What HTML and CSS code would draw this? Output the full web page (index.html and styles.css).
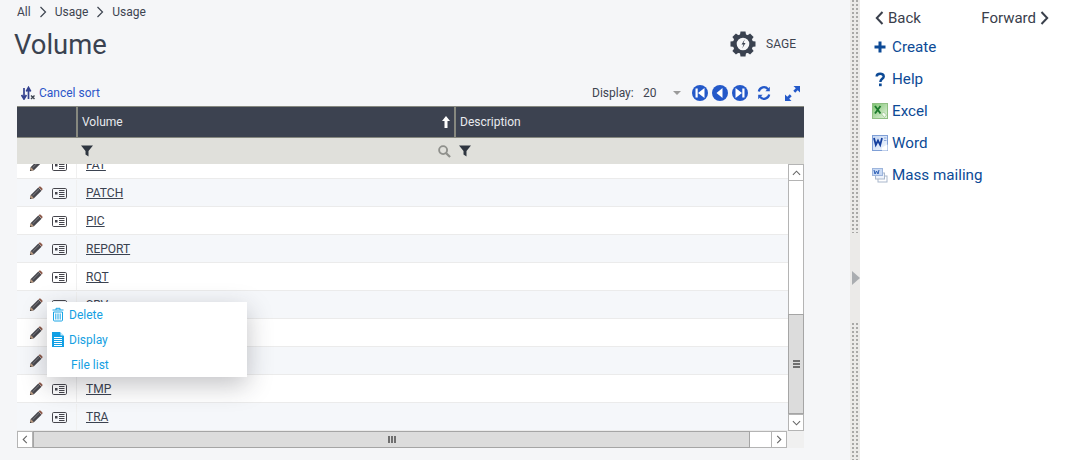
FILE: index.html
```html
<!DOCTYPE html>
<html lang="en">
<head>
<meta charset="utf-8">
<title>Volume</title>
<link rel="stylesheet" href="styles.css">
</head>
<body>
<svg class="defs" width="0" height="0" aria-hidden="true">
  <defs>
    <linearGradient id="xlsfill" x1="0" y1="0" x2="1" y2="1"><stop offset="0" stop-color="#7cc36f"/><stop offset="1" stop-color="#e6f4e0"/></linearGradient>
    <linearGradient id="docfill" x1="0" y1="0" x2="1" y2="1"><stop offset="0" stop-color="#c3d6f3"/><stop offset="1" stop-color="#f3f7fd"/></linearGradient>
  </defs>
  <symbol id="pencil" viewBox="0 0 15 15">
    <path d="M1 14l.9-4.300L10 1.600l3.400 3.400-8.100 8.100z" fill="#46464c"/>
    <path d="M10.800.8c.5-.5 1.200-.5 1.700 0l1.700 1.700c.5.500.5 1.200 0 1.700l-.6.600-3.400-3.400z" fill="#8c5a4a"/>
    <path d="M1 14l.9-4.300 3.400 3.400z" fill="#b99a80"/>
    <path d="M1 14l.4-1.800 1.400 1.400z" fill="#333"/>
    <path d="M3.800 10.500l7-7" stroke="#8b8b90" stroke-width=".9"/>
  </symbol>
  <symbol id="card" viewBox="0 0 15 11">
    <rect x=".5" y=".5" width="14" height="10" rx="1.200" fill="none" stroke="#45454c" stroke-width="1"/>
    <rect x="3" y="4" width="2.500" height="2.500" fill="#45454c"/>
    <path d="M7 2.500h5.500M7 4.500h5.500M7 6.500h5.500M7 8.500h5.500" stroke="#45454c" stroke-width="1"/>
  </symbol>
  <symbol id="funnel" viewBox="0 0 12 12">
    <path d="M0 .5h12L7.500 6v5.500L4.500 9.500V6z" fill="#2f3640"/>
  </symbol>
</svg>

<main class="main">
  <nav class="crumbs">
    <span>All</span>
    <svg class="crumb-sep" viewBox="0 0 8 12"><path d="M1.500 1l5 5-5 5" fill="none" stroke="#3d4450" stroke-width="1.200"/></svg>
    <span>Usage</span>
    <svg class="crumb-sep" viewBox="0 0 8 12"><path d="M1.500 1l5 5-5 5" fill="none" stroke="#3d4450" stroke-width="1.200"/></svg>
    <span>Usage</span>
  </nav>

  <header class="title-row">
    <h1 class="title">Volume</h1>
    <div class="user">
      <svg class="gear" viewBox="0 0 26 26">
        <g fill="#3a4250">
          <path d="M10.500 .5h5l.6 4h-6.200z"/>
          <path d="M10.500 .5h5l.6 4h-6.200z" transform="rotate(45 13 13)"/>
          <path d="M10.500 .5h5l.6 4h-6.200z" transform="rotate(90 13 13)"/>
          <path d="M10.500 .5h5l.6 4h-6.200z" transform="rotate(135 13 13)"/>
          <path d="M10.500 .5h5l.6 4h-6.200z" transform="rotate(180 13 13)"/>
          <path d="M10.500 .5h5l.6 4h-6.200z" transform="rotate(225 13 13)"/>
          <path d="M10.500 .5h5l.6 4h-6.200z" transform="rotate(270 13 13)"/>
          <path d="M10.500 .5h5l.6 4h-6.200z" transform="rotate(315 13 13)"/>
        </g>
        <circle cx="13" cy="13" r="8.200" fill="#f5f6f8" stroke="#3a4250" stroke-width="3.800"/>
        <path d="M14.800 8.300l-3.300 5.200h2l-1.300 4 3.300-5.500h-2z" fill="#3a4250"/>
      </svg>
      <span class="user-name">SAGE</span>
    </div>
  </header>

  <div class="toolbar">
    <a class="cancel-sort">
      <svg class="sort-icon" viewBox="0 0 14 14">
        <path d="M3 2v10M.6 9L3 13l2.400-4" fill="none" stroke="#34428f" stroke-width="1.700"/>
        <path d="M7.500 13V3M5.300 5.500L7.500 1.500l2.200 4" fill="none" stroke="#34428f" stroke-width="1.700"/>
        <path d="M10 9.500l3.500 3.500M13.500 9.500L10 13" stroke="#3d4450" stroke-width="1.400"/>
      </svg>
      Cancel sort
    </a>
    <div class="pager">
      <span class="display-label">Display:</span>
      <span class="display-value">20</span>
      <span class="caret"></span>
      <svg class="nav-btn" viewBox="0 0 16 16"><circle cx="8" cy="8" r="8" fill="#2459c9"/><path d="M3.500 3.500h2.200v9H3.500zM12.500 3v10L6 8z" fill="#fff"/></svg>
      <svg class="nav-btn" viewBox="0 0 16 16"><circle cx="8" cy="8" r="8" fill="#2459c9"/><path d="M10.500 3v10L4.500 8z" fill="#fff"/></svg>
      <svg class="nav-btn" viewBox="0 0 16 16"><circle cx="8" cy="8" r="8" fill="#2459c9"/><path d="M10.300 3.500h2.200v9h-2.200zM3.500 3v10L10 8z" fill="#fff"/></svg>
      <svg class="refresh" viewBox="0 0 14 14">
        <path d="M1.800 5.500A5.200 5.200 0 0 1 11 3.200" fill="none" stroke="#2459c9" stroke-width="2.200"/>
        <path d="M12.800 .8v4.400H8.400z" fill="#2459c9"/>
        <path d="M12.200 8.500A5.200 5.200 0 0 1 3 10.800" fill="none" stroke="#2459c9" stroke-width="2.200"/>
        <path d="M1.200 13.200V8.800h4.400z" fill="#2459c9"/>
      </svg>
      <svg class="expand" viewBox="0 0 15 15">
        <path d="M8.500 0H15v6.500L12.700 4.200 10.200 6.700 8.300 4.800l2.500-2.500z" fill="#2459c9"/>
        <path d="M6.500 15H0V8.500l2.300 2.300 2.500-2.500 1.900 1.900-2.500 2.500z" fill="#2459c9"/>
      </svg>
    </div>
  </div>

  <section class="grid">
    <div class="grid-head">
      <div class="hcell hcell-actions"></div>
      <div class="hcell hcell-volume">
        <span>Volume</span>
        <svg class="sort-up" viewBox="0 0 8 12"><path d="M4 0l4 5H5.500v7h-3V5H0z" fill="#fff"/></svg>
      </div>
      <div class="hcell hcell-desc"><span>Description</span></div>
    </div>

    <div class="grid-filter">
      <div class="fcell-actions"></div>
      <div class="fcell-volume">
        <svg class="funnel"><use href="#funnel"/></svg>
        <svg class="search" viewBox="0 0 14 14"><circle cx="5.500" cy="5.500" r="4.300" fill="none" stroke="#8f908c" stroke-width="2"/><path d="M8.800 8.800l4.200 4.200" stroke="#8f908c" stroke-width="2.400"/></svg>
      </div>
      <div class="fcell-desc"><svg class="funnel"><use href="#funnel"/></svg></div>
    </div>

    <div class="grid-body">
      <div class="rows">
        <div class="rows-inner">
          <div class="row"><div class="acts"><svg class="ic-pen"><use href="#pencil"/></svg><svg class="ic-card"><use href="#card"/></svg></div><a class="code">FAT</a></div>
          <div class="row alt"><div class="acts"><svg class="ic-pen"><use href="#pencil"/></svg><svg class="ic-card"><use href="#card"/></svg></div><a class="code">PATCH</a></div>
          <div class="row"><div class="acts"><svg class="ic-pen"><use href="#pencil"/></svg><svg class="ic-card"><use href="#card"/></svg></div><a class="code">PIC</a></div>
          <div class="row alt"><div class="acts"><svg class="ic-pen"><use href="#pencil"/></svg><svg class="ic-card"><use href="#card"/></svg></div><a class="code">REPORT</a></div>
          <div class="row"><div class="acts"><svg class="ic-pen"><use href="#pencil"/></svg><svg class="ic-card"><use href="#card"/></svg></div><a class="code">RQT</a></div>
          <div class="row alt"><div class="acts"><svg class="ic-pen"><use href="#pencil"/></svg><svg class="ic-card"><use href="#card"/></svg></div><a class="code">SRV</a></div>
          <div class="row"><div class="acts"><svg class="ic-pen"><use href="#pencil"/></svg><svg class="ic-card"><use href="#card"/></svg></div></div>
          <div class="row alt"><div class="acts"><svg class="ic-pen"><use href="#pencil"/></svg><svg class="ic-card"><use href="#card"/></svg></div></div>
          <div class="row"><div class="acts"><svg class="ic-pen"><use href="#pencil"/></svg><svg class="ic-card"><use href="#card"/></svg></div><a class="code">TMP</a></div>
          <div class="row alt"><div class="acts"><svg class="ic-pen"><use href="#pencil"/></svg><svg class="ic-card"><use href="#card"/></svg></div><a class="code">TRA</a></div>
        </div>
      </div>
      <div class="vscroll">
        <div class="sb-btn sb-btn-v"><svg viewBox="0 0 10 6"><path d="M1 5l4-4 4 4" fill="none" stroke="#666" stroke-width="1.200"/></svg></div>
        <div class="v-track"></div>
        <div class="v-thumb"><span></span><span></span><span></span></div>
        <div class="sb-btn sb-btn-v"><svg viewBox="0 0 10 6"><path d="M1 1l4 4 4-4" fill="none" stroke="#666" stroke-width="1.200"/></svg></div>
      </div>
    </div>

    <div class="hscroll">
      <div class="sb-btn sb-btn-h"><svg viewBox="0 0 6 10"><path d="M5 1L1 5l4 4" fill="none" stroke="#666" stroke-width="1.200"/></svg></div>
      <div class="h-thumb"><span></span><span></span><span></span></div>
      <div class="h-track"></div>
      <div class="sb-btn sb-btn-h"><svg viewBox="0 0 6 10"><path d="M1 1l4 4-4 4" fill="none" stroke="#666" stroke-width="1.200"/></svg></div>
      <div class="sb-corner"></div>
    </div>

    <div class="menu">
      <a class="menu-item">
        <svg class="menu-ic" viewBox="0 0 12 14"><path d="M.5 2.500h11M4 2.500V.8h4v1.700" fill="none" stroke="#1aa5e6" stroke-width="1"/><path d="M1.500 4.500h9v8q0 1-1 1h-7q-1 0-1-1z" fill="none" stroke="#1aa5e6" stroke-width="1"/><path d="M3.800 6v6M6 6v6M8.200 6v6" stroke="#1aa5e6" stroke-width="1"/></svg>
        Delete
      </a>
      <a class="menu-item">
        <svg class="menu-ic" viewBox="0 0 12 15"><path d="M0 0h8l4 4v11H0z" fill="#12a0e4"/><path d="M8.500 0L12 3.500H8.500z" fill="#bfe8fa"/><path d="M2 5.500h8M2 7.500h8M2 9.500h8M2 11.500h8M2 13.500h8" stroke="#fff" stroke-width="1"/></svg>
        Display
      </a>
      <a class="menu-item menu-item-plain">File list</a>
    </div>
  </section>
</main>

<div class="splitter">
  <div class="grip grip-top"></div>
  <div class="split-mid"><span class="split-arrow"></span></div>
  <div class="grip grip-bottom"></div>
</div>

<aside class="side">
  <div class="side-nav">
    <a class="nav-link">
      <svg class="chev" viewBox="0 0 8 14"><path d="M7 1L1.300 7 7 13" fill="none" stroke="#3a404c" stroke-width="2"/></svg>
      Back
    </a>
    <a class="nav-link">
      Forward
      <svg class="chev" viewBox="0 0 8 14"><path d="M1 1l5.700 6L1 13" fill="none" stroke="#3a404c" stroke-width="2"/></svg>
    </a>
  </div>
  <ul class="actions">
    <li class="action">
      <svg class="act-ic" viewBox="0 0 16 16"><path d="M6.500 2.500h3v4h4v3h-4v4h-3v-4h-4v-3h4z" fill="#0d4a96"/></svg>
      Create
    </li>
    <li class="action">
      <svg class="act-ic" viewBox="0 0 16 16"><path d="M4.700 5.600C4.700 1.900 11.700 1.800 11.700 5.400 11.700 7.900 8.400 7.800 8.400 11" fill="none" stroke="#0d4a96" stroke-width="2.500"/><rect x="7" y="12.500" width="2.700" height="2.700" fill="#0d4a96"/></svg>
      Help
    </li>
    <li class="action">
      <svg class="act-ic" viewBox="0 0 16 16"><rect x=".5" y=".5" width="15" height="15" fill="url(#xlsfill)" stroke="#8fbf82"/><path d="M3 3l5.500 7.500M8.500 3L3 10.500" stroke="#1c7a2c" stroke-width="1.900"/><path d="M9.500 11l2-2 3 3-2 2.500z" fill="#f4fbf1" stroke="#8fbf82" stroke-width=".7"/></svg>
      Excel
    </li>
    <li class="action">
      <svg class="act-ic" viewBox="0 0 16 16"><rect x=".5" y=".5" width="15" height="15" fill="url(#docfill)" stroke="#7f9fd6"/><path d="M2 3l1.800 7L6 5.500 8.200 10 10 3" fill="none" stroke="#143f9e" stroke-width="1.800"/><path d="M10 12.500l5.500-3v6H10z" fill="#fff"/><path d="M12 3h2.500M12 5.500h2.500" stroke="#8fa9d8"/></svg>
      Word
    </li>
    <li class="action">
      <svg class="act-ic" viewBox="0 0 16 16"><rect x="6" y="9" width="9" height="6" fill="#fff" stroke="#a9b7cc"/><rect x="3.500" y="6" width="9" height="6" fill="#eef3fb" stroke="#a9b7cc"/><rect x=".5" y="1.500" width="10" height="7" fill="#c9daf4" stroke="#9db5dc"/><path d="M2 3l1 4 1.500-3L6 7l1-4" fill="none" stroke="#2a5db5"/></svg>
      Mass mailing
    </li>
  </ul>
</aside>
</body>
</html>
```
FILE: styles.css
```css
* { box-sizing: border-box; }
html, body { margin: 0; padding: 0; height: 460px; overflow: hidden; }
body {
  display: flex;
  font-family: Roboto, "Liberation Sans", sans-serif;
  background: #fff;
  color: #3d4450;
}
.defs { position: absolute; }
svg { display: block; flex: none; }

.main {
  position: relative;
  width: 850px;
  height: 460px;
  flex: none;
  background: #f5f6f8;
  padding-top: 4px;
}

.crumbs {
  display: flex;
  align-items: center;
  height: 16px;
  padding-left: 17px;
  font-size: 12px;
  color: #3d4450;
}
.crumb-sep { width: 8px; height: 12px; margin: 0 8px; }

.title-row {
  display: flex;
  align-items: center;
  justify-content: space-between;
  height: 46px;
  margin-top: 2px;
  padding: 0 54px 0 14px;
}
.title { margin: 0; font-size: 27.4px; font-weight: 400; color: #3a4250; }
.user { display: flex; align-items: center; gap: 10px; }
.gear { width: 26px; height: 26px; margin-bottom: 2px; }
.user-name { font-size: 12px; color: #3d4450; margin-bottom: 2px; }

.toolbar {
  display: flex;
  align-items: center;
  justify-content: space-between;
  height: 20px;
  margin-top: 15px;
  margin-left: 17px;
  width: 787px;
  padding: 0 4px;
  font-size: 12px;
}
.cancel-sort { display: flex; align-items: center; gap: 4px; color: #2b55c8; }
.sort-icon { width: 14px; height: 14px; }
.pager { display: flex; align-items: center; }
.display-label { width: 51px; color: #3d4450; }
.display-value { width: 30px; color: #3d4450; }
.caret {
  width: 0;
  height: 0;
  margin-right: 11px;
  border-left: 4px solid transparent;
  border-right: 4px solid transparent;
  border-top: 4px solid #9a9a9a;
}
.nav-btn { width: 16px; height: 16px; margin-right: 4px; }
.refresh { width: 14px; height: 14px; margin: 0 14px 0 5px; }
.expand { width: 15px; height: 15px; }

.grid {
  margin-left: 17px;
  width: 787px;
  margin-top: 3px;
  font-size: 12px;
}
.grid-head {
  display: flex;
  height: 32px;
  background: #3c4250;
  border-top: 1px solid #86887f;
  border-bottom: 1px solid #86887f;
  color: #e8eaee;
}
.hcell { display: flex; align-items: center; }
.hcell-actions { width: 59px; }
.hcell-volume {
  width: 380px;
  justify-content: space-between;
  padding: 0 4px;
  border-left: 2px solid #86887f;
  border-right: 2px solid #86887f;
}
.hcell-desc { flex: 1; padding-left: 4px; }
.sort-up { width: 8px; height: 12px; }

.grid-filter {
  display: flex;
  height: 26px;
  background: #e0e0db;
  align-items: center;
}
.fcell-actions { width: 64px; }
.fcell-volume {
  width: 373px;
  display: flex;
  align-items: center;
  justify-content: space-between;
}
.fcell-desc { flex: 1; padding-left: 5px; }
.funnel { width: 12px; height: 12px; }
.search { width: 13px; height: 13px; margin-right: 3px; }

.grid-body { display: flex; height: 267px; }
.rows { flex: 1; overflow: hidden; background: #fff; }
.rows-inner { margin-top: -13px; }
.row {
  display: flex;
  align-items: center;
  height: 28px;
  padding-top: 1px;
  background: #fff;
  border-bottom: 1px solid #ebebeb;
}
.row.alt { background: #f5f7fa; }
.acts {
  display: flex;
  align-items: center;
  width: 60px;
  height: 100%;
  padding-left: 12px;
  border-right: 1px solid #f0f0f0;
}
.ic-pen { width: 14px; height: 14px; margin-right: 9px; }
.ic-card { width: 15px; height: 11px; }
.code {
  margin-left: 9px;
  color: #3a4250;
  text-decoration: underline;
}

.vscroll {
  display: flex;
  flex-direction: column;
  width: 16px;
  flex: none;
}
.sb-btn {
  display: flex;
  align-items: center;
  justify-content: center;
  background: #fff;
  border: 1px solid #b4b4b4;
  flex: none;
}
.sb-btn-v { height: 17px; }
.sb-btn-v svg { width: 9px; height: 6px; }
.sb-btn-h { width: 16px; height: 100%; }
.sb-btn-h svg { width: 6px; height: 9px; }
.v-track {
  flex: 1;
  background: #fff;
  border-left: 1px solid #b4b4b4;
  border-right: 1px solid #b4b4b4;
}
.v-thumb {
  height: 100px;
  flex: none;
  display: flex;
  flex-direction: column;
  align-items: center;
  justify-content: center;
  gap: 1px;
  background: #dcdcdc;
  border: 1px solid #a5a5a5;
}
.v-thumb span { width: 7px; height: 2px; background: #6f6f6f; }

.hscroll { display: flex; height: 17px; }
.h-thumb {
  width: 717px;
  display: flex;
  align-items: center;
  justify-content: center;
  gap: 1px;
  background: #dcdcdc;
  border: 1px solid #a5a5a5;
}
.h-thumb span { width: 2px; height: 7px; background: #6f6f6f; }
.h-track {
  width: 21px;
  background: #fff;
  border-top: 1px solid #b4b4b4;
  border-bottom: 1px solid #b4b4b4;
}
.sb-corner { width: 17px; background: #f0f0f0; }

.menu {
  position: absolute;
  left: 47px;
  top: 302px;
  width: 200px;
  height: 75px;
  display: flex;
  flex-direction: column;
  background: #fff;
  box-shadow: 0 8px 24px rgba(40, 40, 50, .28);
}
.menu-item {
  display: flex;
  align-items: center;
  gap: 5px;
  height: 25px;
  padding-left: 5px;
  color: #15a0e2;
  font-size: 12px;
}
.menu-item-plain { padding-left: 24px; }
.menu-ic { width: 12px; height: 15px; }

.splitter {
  width: 10px;
  height: 460px;
  flex: none;
  display: flex;
  flex-direction: column;
  background: #ebeae8;
}
.grip {
  background-image:
    linear-gradient(#a8a8a6 0 2px, transparent 2px),
    linear-gradient(#a8a8a6 0 2px, transparent 2px);
  background-size: 2px 4px, 2px 4px;
  background-position: 2px 0, 6px 0;
  background-repeat: repeat-y;
}
.grip-top { height: 233px; }
.grip-bottom { flex: 1; }
.split-mid {
  height: 90px;
  display: flex;
  align-items: center;
  justify-content: flex-end;
}
.split-arrow {
  width: 0;
  height: 0;
  border-top: 7px solid transparent;
  border-bottom: 7px solid transparent;
  border-left: 8px solid #aaadb0;
}

.side {
  flex: 1;
  padding-top: 9px;
  background: #fff;
}
.side-nav {
  display: flex;
  justify-content: space-between;
  height: 18px;
  padding: 0 18px 0 15px;
}
.nav-link {
  display: flex;
  align-items: center;
  gap: 4px;
  font-size: 15px;
  color: #3a404c;
}
.chev { width: 9px; height: 14px; }
.actions {
  margin: 4px 0 0;
  padding: 0 0 0 12px;
  list-style: none;
}
.action {
  display: flex;
  align-items: center;
  gap: 4px;
  height: 32px;
  font-size: 15.2px;
  color: #0d4a96;
}
.act-ic { width: 16px; height: 16px; }
```
